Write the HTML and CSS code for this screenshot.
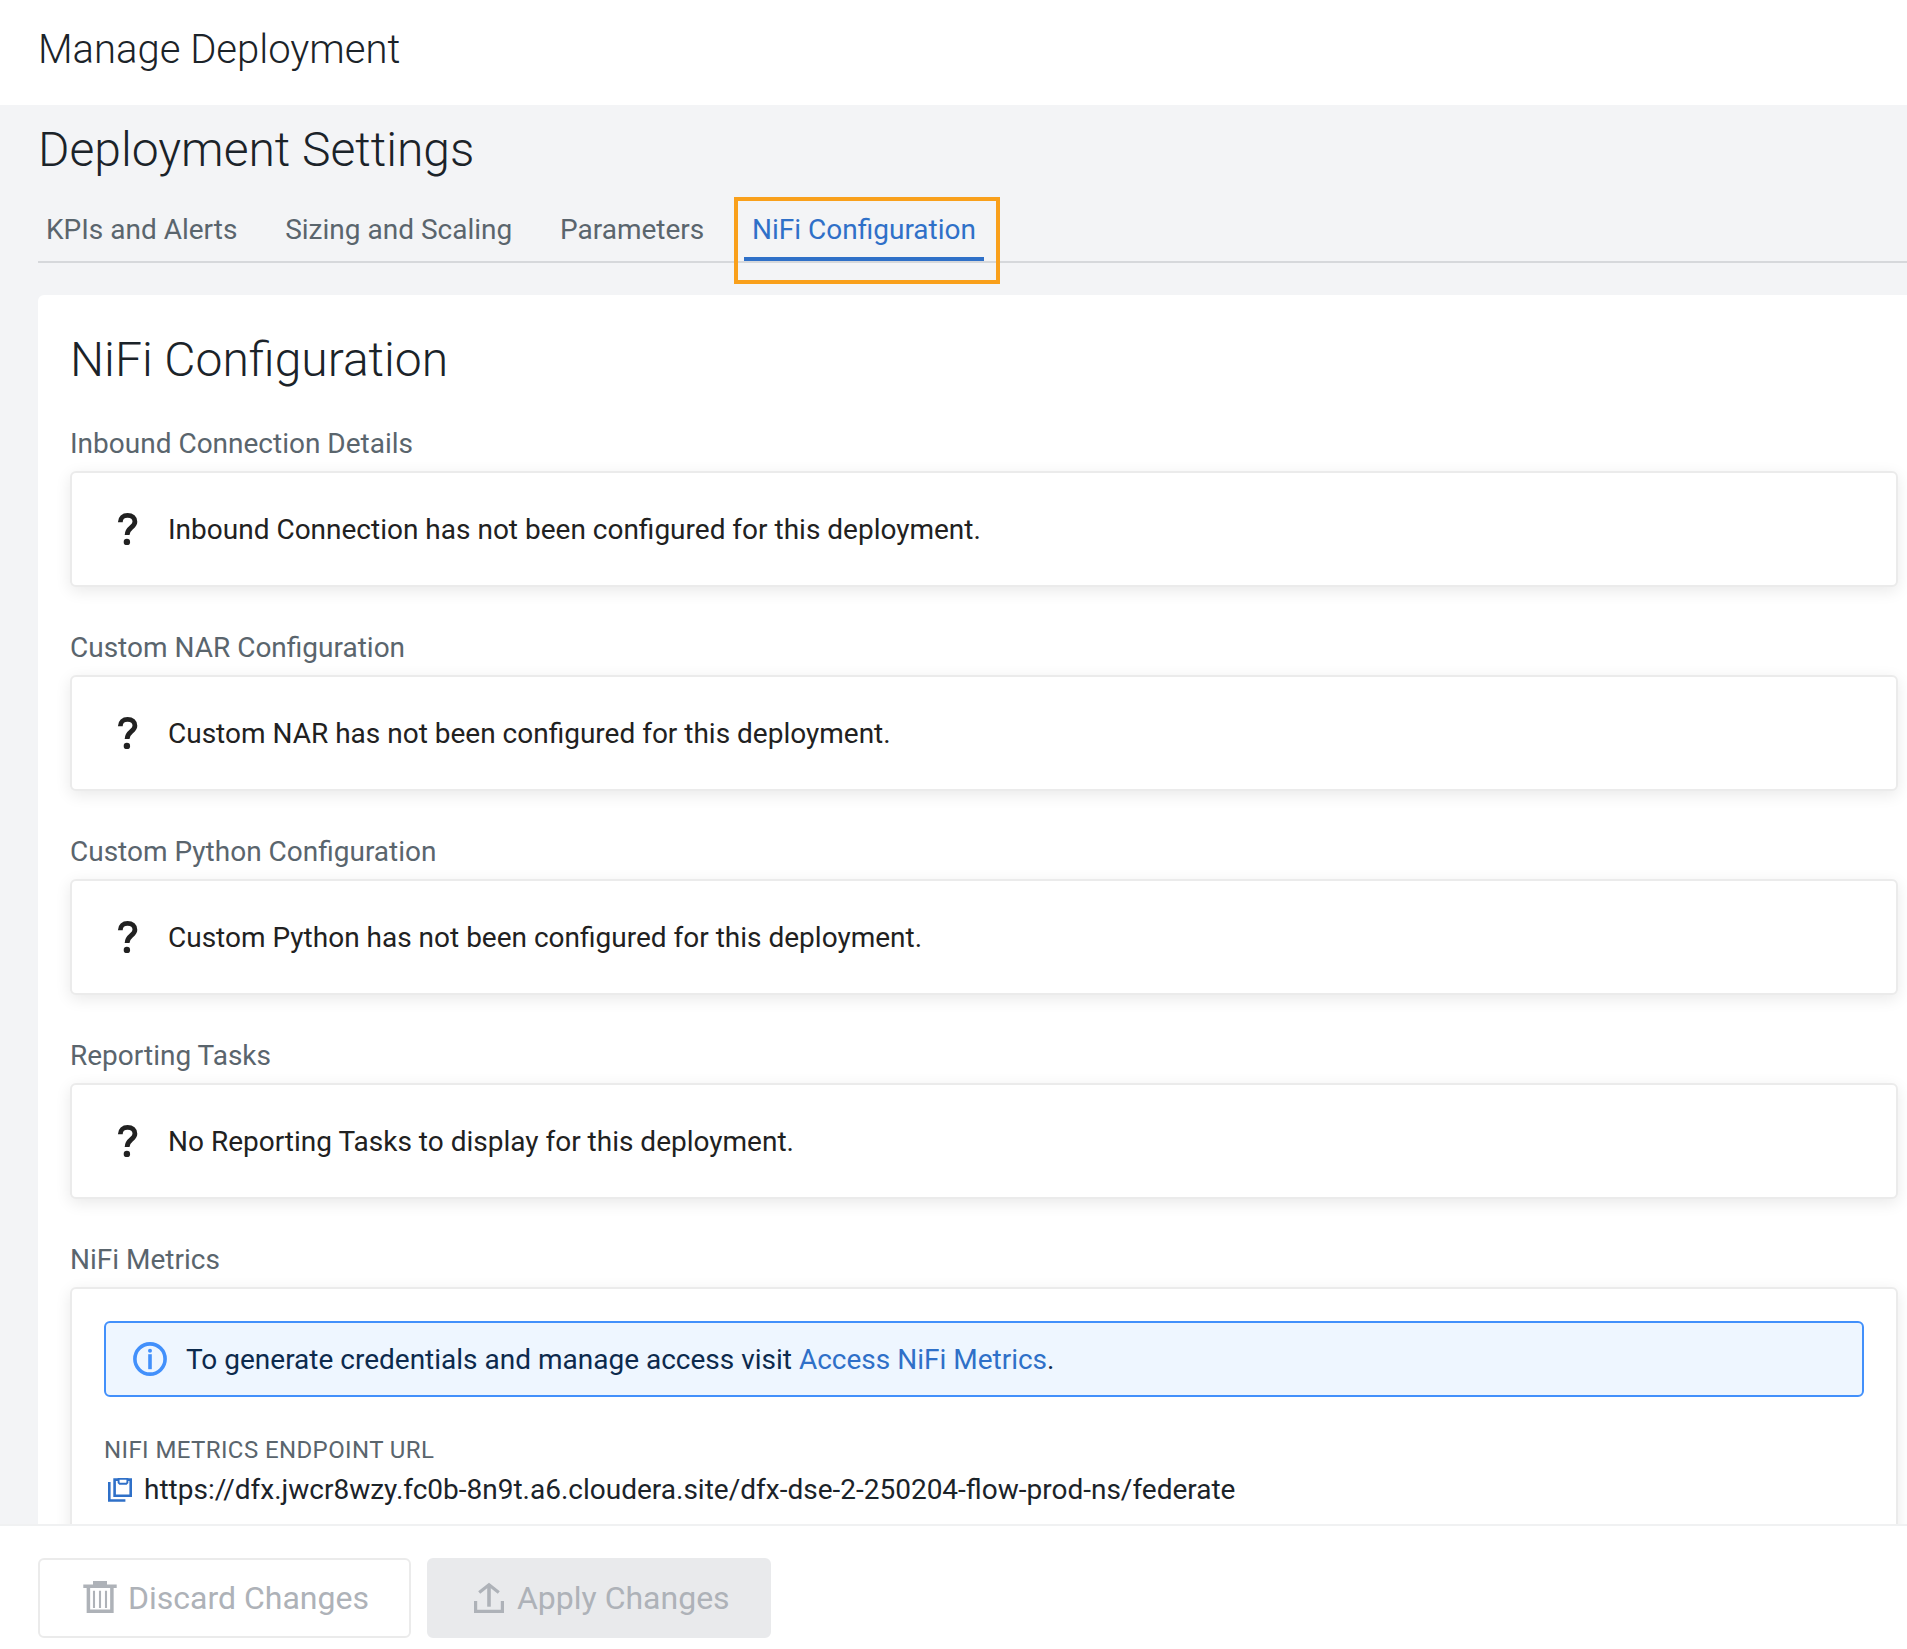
FILE: index.html
```html
<!DOCTYPE html>
<html lang="en">
<head>
<meta charset="utf-8">
<title>Manage Deployment</title>
<link rel="stylesheet" href="styles.css">
</head>
<body>
<svg class="symbols" aria-hidden="true">
  <symbol id="question" viewBox="0 0 48 48">
    <path d="M16.3 17.2C16.3 13 19.3 10.4 23.6 10.4C28.1 10.4 30.9 12.9 30.9 16.7C30.9 22.6 23.1 22.4 23.1 30" fill="none" stroke="currentColor" stroke-width="4.8"/>
    <circle cx="22.9" cy="36.9" r="3.2" fill="currentColor"/>
  </symbol>
</svg>
<div class="page">
  <header class="page-header"><h1 class="page-title">Manage Deployment</h1></header>

  <main class="content">
    <h2 class="section-title">Deployment Settings</h2>
    <nav class="tabs">
      <a class="tab">KPIs and Alerts</a>
      <a class="tab">Sizing and Scaling</a>
      <a class="tab">Parameters</a>
      <a class="tab tab-active">NiFi Configuration<span class="highlight"></span></a>
    </nav>

    <section class="panel">
      <h2 class="panel-title">NiFi Configuration</h2>

      <h3 class="label">Inbound Connection Details</h3>
      <div class="box empty"><svg class="question"><use href="#question"/></svg><span class="empty-text">Inbound Connection has not been configured for this deployment.</span></div>

      <h3 class="label">Custom NAR Configuration</h3>
      <div class="box empty"><svg class="question"><use href="#question"/></svg><span class="empty-text">Custom NAR has not been configured for this deployment.</span></div>

      <h3 class="label">Custom Python Configuration</h3>
      <div class="box empty"><svg class="question"><use href="#question"/></svg><span class="empty-text">Custom Python has not been configured for this deployment.</span></div>

      <h3 class="label">Reporting Tasks</h3>
      <div class="box empty"><svg class="question"><use href="#question"/></svg><span class="empty-text">No Reporting Tasks to display for this deployment.</span></div>

      <h3 class="label">NiFi Metrics</h3>
      <div class="box metrics">
        <div class="alert">
          <svg class="icon-lg" viewBox="0 0 40 40" fill="none" stroke="currentColor" stroke-width="3.6">
            <circle cx="20" cy="20" r="15.1"/>
            <path d="M20 15.2V30.2"/>
            <circle cx="20" cy="11.8" r="2" fill="currentColor" stroke="none"/>
          </svg>
          <span class="alert-text">To generate credentials and manage access visit <a class="link">Access NiFi Metrics</a>.</span>
        </div>
        <div class="field-label">NIFI METRICS ENDPOINT URL</div>
        <div class="field-value">
          <svg class="icon-sm" viewBox="0 0 32 32" fill="none" stroke="currentColor" stroke-width="2.6">
            <path d="M5.3 8V26.5H21.4"/>
            <path d="M10.6 5.6H26.7V21.7H10.6Z"/>
            <path d="M14.6 4.9V8.6L15.7 9.7H22.3L23.4 8.6V4.9Z" stroke-width="1.9" fill="#fff"/>
          </svg>
          <span>https://dfx.jwcr8wzy.fc0b-8n9t.a6.cloudera.site/dfx-dse-2-250204-flow-prod-ns/federate</span>
        </div>
      </div>
    </section>
  </main>

  <footer class="footer">
    <button class="btn btn-outline" disabled>
      <svg class="icon-lg" viewBox="0 0 40 40" fill="none" stroke="currentColor">
        <path d="M13 3H27V7H13Z" fill="currentColor" stroke="none"/>
        <path d="M3.3 8.2H36.7" stroke-width="3.4"/>
        <path d="M8.4 8V33.2H31.9V8" stroke-width="3.5"/>
        <path d="M14 12.7V30M20 12.7V30M26 12.7V30" stroke-width="2.1"/>
      </svg>
      <span>Discard Changes</span>
    </button>
    <button class="btn btn-filled" disabled>
      <svg class="icon-lg" viewBox="0 0 40 40" fill="none" stroke="currentColor" stroke-width="3.2">
        <path d="M6.6 23V33.4H33.4V23"/>
        <path d="M20 6.5V28.7" stroke-width="3.6"/>
        <path d="M10.2 14.6L20 6.8L29.8 14.6"/>
      </svg>
      <span>Apply Changes</span>
    </button>
  </footer>
</div>
</body>
</html>
```
FILE: styles.css
```css
* { box-sizing: border-box; }

body {
  margin: 0;
  font-family: Roboto, "Liberation Sans", sans-serif;
  font-size: 28px;
  line-height: 44px;
  color: #1b2329;
  background: #fff;
}

h1, h2, h3 { margin: 0; }

.symbols { display: none; }

.page {
  display: flex;
  flex-direction: column;
  height: 1649px;
  overflow: hidden;
}

.page-header {
  flex: none;
  height: 105px;
  padding: 22px 38px 0;
}

.page-title {
  font-size: 40px;
  font-weight: 300;
  line-height: 56px;
}

.content {
  flex: 1;
  min-height: 0;
  overflow: hidden;
  padding-left: 38px;
  background: #f3f4f6;
}

.section-title,
.panel-title {
  font-size: 48px;
  font-weight: 300;
  line-height: 64px;
}

.section-title { height: 76px; padding-top: 13px; }

.tabs {
  display: flex;
  gap: 31.8px;
  height: 82px;
  border-bottom: 2px solid #d6d8db;
}

.tab {
  position: relative;
  height: 80px;
  padding: 27px 8px 0;
  color: #5a656d;
  white-space: nowrap;
}

.tab-active {
  color: #2f70c8;
  border-bottom: 4px solid #2f70c8;
}

.highlight {
  position: absolute;
  top: 16px;
  left: -10px;
  right: -16px;
  height: 86.5px;
  border: 4px solid #f9a01b;
}

.panel {
  width: 1892px;
  margin-top: 32px;
  padding: 33px 32px 32px;
  background: #fff;
  border-radius: 6px 0 0 0;
}

.panel-title { height: 94px; }

.label {
  font-size: 28px;
  font-weight: 400;
  line-height: 44px;
  height: 49px;
  color: #5a656d;
}

.box {
  margin-bottom: 39px;
  background: #fff;
  border: 2px solid #ebebeb;
  border-radius: 6px;
  box-shadow: 0 4px 16px rgba(0, 0, 0, 0.09);
}

.empty {
  display: flex;
  align-items: center;
  gap: 16px;
  height: 116px;
  padding-left: 32px;
  color: #212121;
}

.empty-text {
  padding-top: 2px;
  letter-spacing: normal;
}

.question { flex: none; width: 48px; height: 48px; }

.metrics {
  height: 320px;
  padding: 32px;
}

.alert {
  display: flex;
  align-items: center;
  gap: 16px;
  height: 76px;
  padding: 0 24px;
  color: #4290fb;
  background: #eef6ff;
  border: 2px solid #4290fb;
  border-radius: 6px;
}

.alert-text { padding-top: 2px; color: #0c2a4d; }
.link { color: #2f70c8; }

.field-label {
  margin-top: 33px;
  font-size: 24px;
  line-height: 40px;
  letter-spacing: 0.4px;
  color: #5a656d;
}

.field-value {
  display: flex;
  align-items: center;
  gap: 8px;
  height: 40px;
}

.icon-lg { flex: none; width: 40px; height: 40px; }
.icon-sm { flex: none; width: 32px; height: 32px; color: #2f70c8; }

.footer {
  flex: none;
  display: flex;
  gap: 16px;
  height: 125px;
  padding: 32px 38px 0;
  border-top: 2px solid #f0f1f2;
}

.btn {
  display: flex;
  align-items: center;
  gap: 8px;
  height: 80px;
  padding: 0 40px;
  font-family: inherit;
  font-size: 32px;
  line-height: 44px;
  color: #aeb2b8;
  border: 2px solid #ebebeb;
  border-radius: 6px;
}

.btn-outline { background: #fff; }
.btn-filled { padding-right: 39.4px; background: #e9eaec; border-color: #e9eaec; }
```
